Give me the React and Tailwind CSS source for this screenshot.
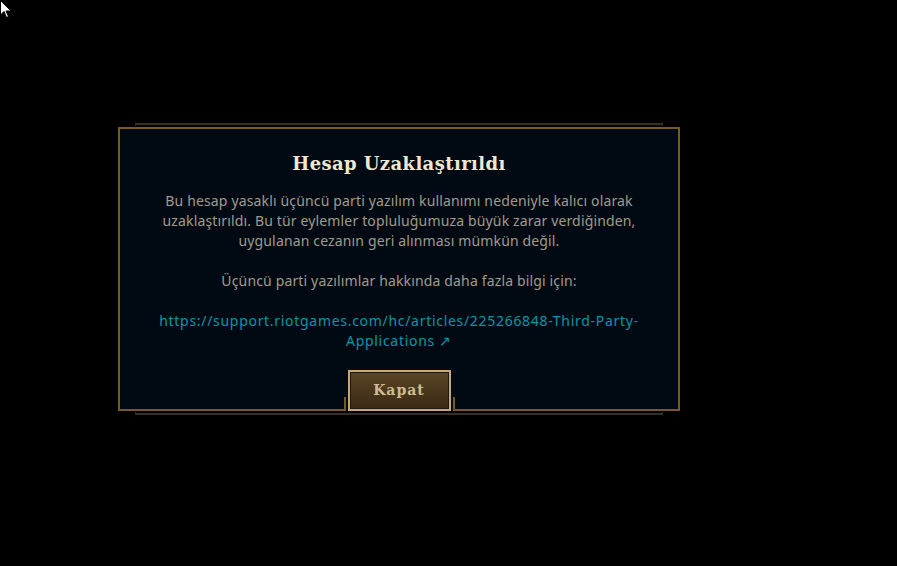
import React from "react";

const SANS = { fontFamily: '"Noto Sans", "Liberation Sans", Arial, sans-serif' };
const SERIF = { fontFamily: '"DejaVu Serif", "Liberation Serif", serif' };

const Cursor = () => (
  <svg className="absolute left-0 top-0" width="12" height="19" viewBox="0 0 12 19">
    <path d="M0.5 0.5 L0.5 15 L4 11.5 L6.5 17.5 L8.5 16.5 L6 11 L11 11 Z" fill="#fff" stroke="#000" strokeWidth="1" />
  </svg>
);

const App = () => {
  return (
    <div className="relative min-h-screen w-full overflow-hidden bg-black">
      <Cursor />
      <div className="pl-[118px] pt-[123px]">
        <div className="w-[562px]">
          <div className="mx-[17px] h-[3px] border-x border-t-2 border-[#35301f]" />
          <div className="mt-px flex flex-col items-center border-x-2 border-t-2 border-[#785a28] bg-[#010a13]">
            <h1 className="mt-[21px] text-[18px] font-bold leading-[28px] tracking-[0.4px] text-[#f0e6d2]" style={SERIF}>Hesap Uzaklaştırıldı</h1>
            <div className="mt-[13px] w-[482px] text-center text-[14px] leading-[20px] tracking-[0.15px] text-[#a09b8c]" style={SANS}>
              <p>Bu hesap yasaklı üçüncü parti yazılım kullanımı nedeniyle kalıcı olarak uzaklaştırıldı. Bu tür eylemler topluluğumuza büyük zarar verdiğinden, uygulanan cezanın geri alınması mümkün değil.</p>
              <p className="mt-[20px]">Üçüncü parti yazılımlar hakkında daha fazla bilgi için:</p>
              <p className="-mx-[8px] mt-[20px] tracking-[0.7px] text-[#0596aa]">https://support.riotgames.com/hc/articles/225266848-Third-Party-Applications ↗</p>
            </div>
            <div className="mt-[19px] flex w-full items-end">
              <div className="h-[14px] flex-1 border-b-2 border-[#785a28]" />
              <div className="h-[14px] w-[2px] bg-[#785a28]" />
              <button className="mx-[2px] flex h-[41px] w-[103px] items-center justify-center border-2 border-[#c8aa6e] bg-gradient-to-b from-[#5c4424] to-[#3a2a16] shadow-[inset_0_0_0_1px_#1e1a12]">
                <span className="text-[14px] font-bold tracking-[1px] text-[#cdbe91]" style={SERIF}>Kapat</span>
              </button>
              <div className="h-[14px] w-[2px] bg-[#785a28]" />
              <div className="h-[14px] flex-1 border-b-2 border-[#785a28]" />
            </div>
          </div>
          <div className="mx-[17px] mt-[1px] h-[3px] border-x border-b-2 border-[#35301f]" />
        </div>
      </div>
    </div>
  );
};

export default App;
